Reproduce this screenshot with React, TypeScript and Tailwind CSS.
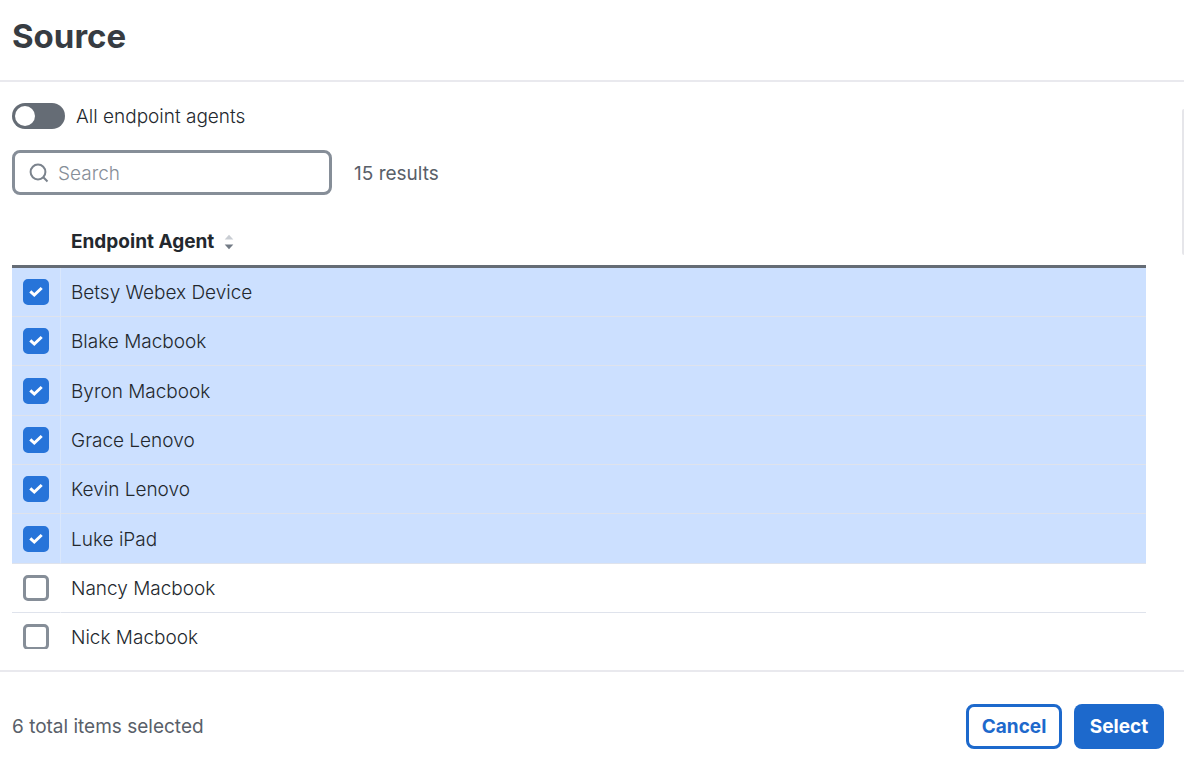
import React, { useState } from "react";
import clsx from "clsx";

const TOTAL_RESULTS = 15;

const AGENTS = [
    "Betsy Webex Device",
    "Blake Macbook",
    "Byron Macbook",
    "Grace Lenovo",
    "Kevin Lenovo",
    "Luke iPad",
    "Nancy Macbook",
    "Nick Macbook",
];

export default function App() {
    const [selected, setSelected] = useState<string[]>(AGENTS.slice(0, 6));
    const [allAgents, setAllAgents] = useState(false);
    const [search, setSearch] = useState("");

    const rows = AGENTS.filter((name) =>
        name.toLowerCase().includes(search.toLowerCase())
    );

    const toggle = (name: string) =>
        setSelected((prev) =>
            prev.includes(name)
                ? prev.filter((item) => item !== name)
                : [...prev, name]
        );

    return (
        <div className="flex h-screen flex-col bg-white font-['Inter',sans-serif] text-[19px] leading-6 font-[360] text-[#23282e]">
            <header className="border-b-2 border-[#e9e9ee] px-3 pt-4 pb-6">
                <h1 className="text-[33px] leading-10 font-bold text-[#373c42]">
                    Source
                </h1>
            </header>

            <main className="relative mb-[21px] min-h-0 flex-1 overflow-hidden pt-[21px] pr-[38px] pl-3">
                <label className="flex w-fit items-center gap-[11px]">
                    <input
                        type="checkbox"
                        role="switch"
                        checked={allAgents}
                        onChange={(e) => setAllAgents(e.target.checked)}
                        className="relative h-[26px] w-[53px] appearance-none rounded-full bg-[#656c75] before:absolute before:top-[3px] before:left-[3px] before:size-5 before:rounded-full before:bg-white checked:bg-[#2774d9] checked:before:left-[30px]"
                    />
                    <span className="pt-0.5">All endpoint agents</span>
                </label>

                <div className="mt-[21px] flex items-center gap-[22px]">
                    <div className="relative w-80">
                        <SearchIcon />
                        <input
                            type="text"
                            aria-label="Search"
                            placeholder="Search"
                            value={search}
                            onChange={(e) => setSearch(e.target.value)}
                            className="block h-[45px] w-full rounded-lg border-3 border-[#868e98] pt-0.5 pr-3 pl-[43px] outline-none placeholder:text-[#868e98]"
                        />
                    </div>
                    <span className="pt-0.5 font-normal text-[#596069]">
                        {search ? rows.length : TOTAL_RESULTS} results
                    </span>
                </div>

                <table className="mt-[23px] w-full table-fixed border-separate border-spacing-0">
                    <thead>
                        <tr className="h-[50px]">
                            <th
                                aria-label="Selected"
                                className="w-[49px] border-b-3 border-[#656c75]"
                            />
                            <th className="border-b-3 border-[#656c75] pl-2.5 text-left font-bold">
                                <button
                                    type="button"
                                    className="flex items-center gap-2.5"
                                >
                                    Endpoint Agent
                                    <SortIcon />
                                </button>
                            </th>
                        </tr>
                    </thead>
                    <tbody>
                        {rows.map((name) => (
                            <AgentRow
                                key={name}
                                name={name}
                                checked={selected.includes(name)}
                                onToggle={() => toggle(name)}
                            />
                        ))}
                    </tbody>
                </table>

                <div className="absolute top-[27px] right-0 h-[146px] w-[2px] rounded-l bg-[#e6e6ea]" />
            </main>

            <footer className="flex items-center justify-between border-t-2 border-[#e9e9ee] pt-8 pr-5 pb-[11px] pl-3">
                <p className="font-[380] text-[#596069]">
                    {selected.length} total items selected
                </p>
                <div className="flex gap-3 font-bold">
                    <button
                        type="button"
                        className="h-[45px] w-24 rounded-lg border-3 border-[#1d69cc] text-[#1d69cc]"
                    >
                        Cancel
                    </button>
                    <button
                        type="button"
                        className="h-[45px] w-[90px] rounded-lg bg-[#1d69cc] text-white"
                    >
                        Select
                    </button>
                </div>
            </footer>
        </div>
    );
}

interface IAgentRowProps {
    name: string;
    checked: boolean;
    onToggle: () => void;
}

function AgentRow({ name, checked, onToggle }: IAgentRowProps) {
    const id = name.toLowerCase().replace(/ /g, "-");

    return (
        <tr
            className={clsx(
                "h-[49px] nth-[3n]:h-[50px]",
                checked && "bg-[#cce0ff]"
            )}
        >
            <td
                className={clsx(
                    "border-r border-b border-b-[#dfe3ec] pl-[11px]",
                    checked ? "border-r-[#d9e7fc]" : "border-r-transparent"
                )}
            >
                <div className="relative size-[26px]">
                    <input
                        id={id}
                        type="checkbox"
                        checked={checked}
                        onChange={onToggle}
                        className="block size-full appearance-none rounded-[5px] border-3 border-[#868e98] bg-white checked:border-[#2774d9] checked:bg-[#2774d9]"
                    />
                    {checked && (
                        <svg
                            viewBox="0 0 26 26"
                            fill="none"
                            stroke="#fff"
                            strokeWidth="3"
                            className="pointer-events-none absolute inset-0"
                        >
                            <path d="M7.3 12.3l4 3.7 7.4-7" />
                        </svg>
                    )}
                </div>
            </td>
            <td className="border-b border-[#dfe3ec] pt-0.5 pl-2.5">
                <label htmlFor={id}>{name}</label>
            </td>
        </tr>
    );
}

function SearchIcon() {
    return (
        <svg
            viewBox="0 0 20 20"
            fill="none"
            stroke="#7b838d"
            strokeWidth="2"
            className="pointer-events-none absolute top-[13px] left-[17px] size-5"
        >
            <circle cx="9" cy="9" r="7.4" />
            <path d="M14.3 14.3l4.2 4.2" />
        </svg>
    );
}

function SortIcon() {
    return (
        <svg viewBox="0 0 10 16" className="h-4 w-[10px]">
            <path d="M.7 5.500L5 .8l4.300 4.700z" fill="#c9cdd3" />
            <path d="M.7 10.600h8.600L5 15.300z" fill="#737b85" />
        </svg>
    );
}
